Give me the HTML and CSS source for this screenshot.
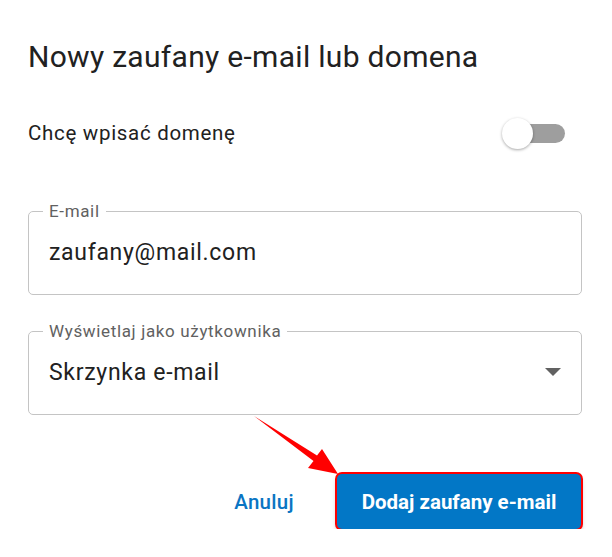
FILE: index.html
```html
<!DOCTYPE html>
<html lang="pl">
<head>
    <meta charset="UTF-8">
    <title>Nowy zaufany e-mail lub domena</title>
    <link rel="stylesheet" href="styles.css">
</head>
<body>
    <div class="dialog">
        <h2 class="title">Nowy zaufany e-mail lub domena</h2>

        <div class="switch-row">
            <span>Chcę wpisać domenę</span>
            <span class="switch"><span class="thumb"></span></span>
        </div>

        <fieldset class="field">
            <legend>E-mail</legend>
            <div class="value">zaufany@mail.com</div>
        </fieldset>

        <fieldset class="field">
            <legend>Wyświetlaj jako użytkownika</legend>
            <div class="value">
                Skrzynka e-mail
                <span class="caret"></span>
            </div>
        </fieldset>

        <div class="actions">
            <button class="btn-text">Anuluj</button>
            <button class="btn-primary">Dodaj zaufany e-mail</button>
        </div>
    </div>

    <svg class="annotation" width="612" height="557" viewBox="0 0 612 557">
        <polygon points="254,416 317,455.5 322,449 338,474 308,468 313.5,461" fill="#ff0000"/>
    </svg>
</body>
</html>
```

FILE: styles.css
```css
body {
    margin: 0;
    background-color: white;
    font-family: Roboto, "Noto Sans", sans-serif;
    color: #212121;
}
.dialog {
    width: 554px;
    margin-left: 28px;
    display: flex;
    flex-direction: column;
}
.title {
    margin: 41px 0 0 0;
    font-size: 30px;
    line-height: 32px;
    font-weight: 400;
    letter-spacing: 0.3px;
}
.switch-row {
    margin-top: 44px;
    height: 32px;
    display: flex;
    justify-content: space-between;
    align-items: center;
    font-size: 20.5px;
    line-height: 32px;
    letter-spacing: 0.7px;
}
.switch {
    position: relative;
    width: 47px;
    height: 19px;
    margin-right: 17px;
    border-radius: 10px;
    background-color: #9e9e9e;
}
.thumb {
    position: absolute;
    left: -16px;
    top: -6px;
    width: 31px;
    height: 31px;
    border-radius: 50%;
    background-color: white;
    box-shadow: 0 1px 3px rgba(0, 0, 0, 0.35);
}
.field {
    margin: 53px 0 0 0;
    padding: 0 20px 10px 20px;
    border: 1px solid #c4c4c4;
    border-radius: 5px;
}
.field + .field {
    margin-top: 27px;
}
.field legend {
    margin-left: -6px;
    padding: 0 6px;
    font-size: 17px;
    line-height: 18px;
    letter-spacing: 0.65px;
    color: #616161;
}
.value {
    height: 64px;
    display: flex;
    justify-content: space-between;
    align-items: center;
    font-size: 23px;
    letter-spacing: 0.7px;
}
.caret {
    width: 0;
    height: 0;
    border-left: 8px solid transparent;
    border-right: 8px solid transparent;
    border-top: 8px solid #616161;
}
.actions {
    margin-top: 59px;
    display: flex;
    justify-content: flex-end;
    align-items: center;
    gap: 23px;
}
button {
    font-family: Roboto, "Noto Sans", sans-serif;
    cursor: pointer;
}
.btn-text {
    border: none;
    background: none;
    padding: 10px 20px;
    font-size: 20.5px;
    font-weight: 500;
    letter-spacing: 0.3px;
    color: #0a75c3;
}
.btn-primary {
    width: 244px;
    height: 55px;
    margin-right: 1px;
    border: none;
    border-radius: 5px;
    background-color: #0277c6;
    color: white;
    font-size: 20.5px;
    font-weight: 700;
    box-shadow: 0 0 0 2px #ff0000, 0 3px 5px rgba(0, 0, 0, 0.35);
}
.annotation {
    position: absolute;
    left: 0;
    top: 0;
    pointer-events: none;
}
```
